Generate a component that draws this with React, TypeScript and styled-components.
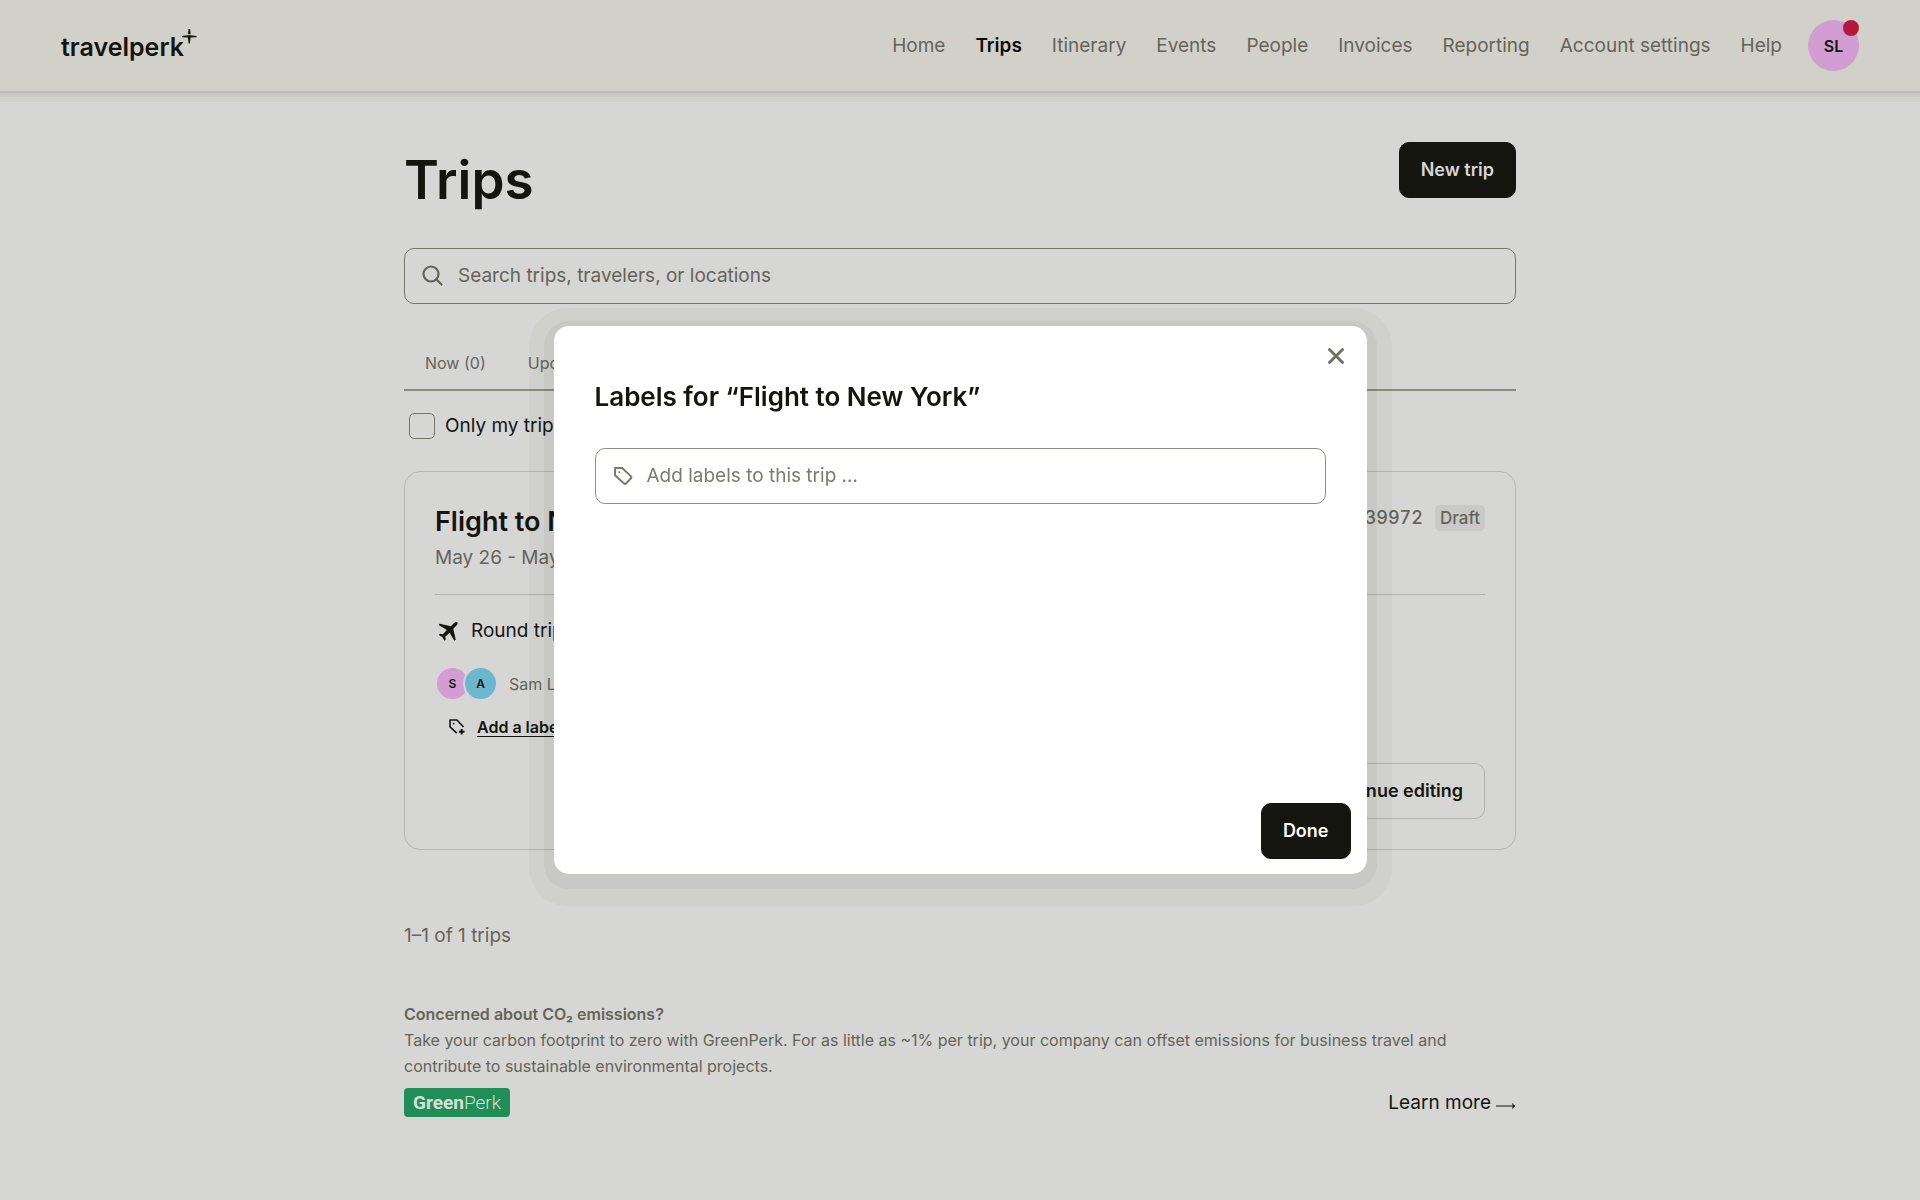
import React from "react";
import styled, { createGlobalStyle } from "styled-components";

const ink = "#14150f";
const muted = "#64645a";

const GlobalStyle = createGlobalStyle`
  *, *::before, *::after { box-sizing: border-box; }
  body {
    margin: 0;
    min-height: 100vh;
    background: #d6d6d4;
    color: ${ink};
    font-family: Inter, "Noto Sans", sans-serif;
    font-size: 19px;
    line-height: 26px;
  }
  h1, h2, p { margin: 0; }
  button, input { font: inherit; color: inherit; }
  a { color: inherit; text-decoration: none; }
`;

/* Header */

const Header = styled.header`
  position: relative;
  display: flex;
  align-items: center;
  justify-content: space-between;
  height: 91px;
  padding: 0 61px;
  background: #d2d1c9;
  box-shadow: 0 2px 0 #bbbcb6, 0 6px 0 #c9c9c6, 0 11px 0 #d0d0cd;
`;

const Logo = styled.a`
  display: flex;
  align-items: flex-start;
  padding-top: 2px;
  font-size: 25px;
  font-weight: 600;
  line-height: 36px;

  svg { display: block; margin-left: -2px; }
`;

const HeaderEnd = styled.div`
  display: flex;
  align-items: center;
  gap: 26px;
`;

const Nav = styled.nav`
  display: flex;
  align-items: center;
  gap: 30px;
`;

const NavLink = styled.a<{ $active?: boolean }>`
  color: ${(p) => (p.$active ? "#0c0c08" : muted)};
  font-weight: ${(p) => (p.$active ? 600 : 400)};
`;

const Profile = styled.button`
  position: relative;
  width: 51px;
  height: 51px;
  padding: 0;
  border: 0;
  border-radius: 50%;
  background: #d29dd2;
  font-size: 16px;
  font-weight: 600;
`;

const Alert = styled.span`
  position: absolute;
  top: 0;
  right: 0;
  width: 16px;
  height: 16px;
  border-radius: 50%;
  background: #b3193d;
`;

/* Page */

const Main = styled.main`
  max-width: 1160px;
  margin: 0 auto;
  padding: 51px 24px;
`;

const TitleRow = styled.div`
  display: flex;
  align-items: flex-start;
  justify-content: space-between;
`;

const PageTitle = styled.h1`
  font-size: 53px;
  font-weight: 600;
  line-height: 76px;
`;

const Button = styled.button<{ $outline?: boolean; $dim?: boolean }>`
  height: 56px;
  padding: 0 21px;
  border: 1px solid ${(p) => (p.$outline ? "#b3b3ae" : ink)};
  border-radius: 10px;
  background: ${(p) => (p.$outline ? "transparent" : ink)};
  color: ${(p) => (p.$outline ? ink : p.$dim ? "#d6d6d4" : "#fff")};
  font-size: 18px;
  font-weight: 600;
`;

const Field = styled.label`
  display: flex;
  align-items: center;
  gap: 13px;
  height: 56px;
  padding: 0 16px;
  border: 1px solid #75756a;
  border-radius: 10px;
  color: ${muted};

  svg { flex: none; }
`;

const FieldInput = styled.input`
  flex: 1;
  min-width: 0;
  padding: 0;
  border: 0;
  outline: 0;
  background: transparent;

  &::placeholder { color: inherit; opacity: 1; }
`;

const SearchField = styled(Field)`
  margin-top: 30px;
`;

const Tabs = styled.div`
  display: flex;
  margin-top: 32px;
  border-bottom: 2px solid #8b8b81;
`;

const Tab = styled.button`
  height: 53px;
  padding: 0 21px;
  border: 0;
  background: transparent;
  color: ${muted};
  font-size: 16px;
`;

const Check = styled.label`
  display: flex;
  align-items: center;
  gap: 10px;
  margin: 22px 0 0 5px;
`;

const CheckBox = styled.input`
  appearance: none;
  width: 26px;
  height: 26px;
  margin: 0;
  border: 1px solid #75756a;
  border-radius: 5px;
`;

/* Trip card */

const Card = styled.article`
  margin-top: 32px;
  padding: 31px 30px 30px;
  border: 1px solid #b5b5b2;
  border-radius: 16px;
`;

const CardHeader = styled.div`
  display: flex;
  align-items: flex-start;
  justify-content: space-between;
  padding-bottom: 23px;
  border-bottom: 1px solid #b0b0ac;
`;

const Heading = styled.h2`
  font-size: 26px;
  font-weight: 600;
  line-height: 38px;
`;

const CardTitle = styled(Heading)`
  font-size: 27px;
`;

const Dates = styled.p`
  margin-top: 4px;
  color: ${muted};
`;

const Status = styled.div`
  display: flex;
  align-items: center;
  gap: 12px;
  padding-top: 2px;
  color: ${muted};
  font-size: 18px;
  font-weight: 500;
  font-variant-numeric: tabular-nums;
`;

const Badge = styled.span`
  padding: 0 5px;
  border-radius: 5px;
  background: #c9c9c7;
  font-size: 17px;
`;

const Route = styled.p`
  display: flex;
  align-items: center;
  gap: 12px;
  margin: 23px 0 0 3px;
`;

const Travelers = styled.div`
  display: flex;
  align-items: center;
  margin-top: 22px;
  color: ${muted};
  font-size: 16px;
`;

const Avatar = styled.span<{ $color: string }>`
  display: grid;
  place-items: center;
  width: 35px;
  height: 35px;
  border: 2px solid #d6d6d4;
  border-radius: 50%;
  background: ${(p) => p.$color};
  color: ${ink};
  font-size: 12px;
  font-weight: 600;

  & + & { margin-left: -7px; }
`;

const Names = styled.span`
  margin-left: 11px;
`;

const AddLabel = styled.button`
  display: flex;
  align-items: center;
  gap: 11px;
  height: 24px;
  margin: 14px 0 0 13px;
  padding: 0;
  border: 0;
  background: transparent;
  font-size: 16px;
  font-weight: 600;
  text-decoration: underline;
  text-underline-offset: 3px;
`;

const CardActions = styled.div`
  display: flex;
  justify-content: flex-end;
  margin-top: 24px;
`;

const Count = styled.p`
  margin-top: 73px;
  color: ${muted};
`;

/* Footer */

const Footer = styled.footer`
  margin-top: 52px;
  color: ${muted};
  font-size: 16px;
`;

const FooterTitle = styled.p`
  font-weight: 600;
`;

const FooterRow = styled.div`
  display: flex;
  align-items: center;
  justify-content: space-between;
  margin-top: 9px;
`;

const GreenPerk = styled.span`
  padding: 0 9px;
  border-radius: 4px;
  background: #1f8f57;
  color: #d9dfd8;
  font-family: Roboto, sans-serif;
  font-size: 19px;
  font-weight: 300;
  line-height: 29px;

  b { font-weight: 700; }
`;

const LearnMore = styled.a`
  display: flex;
  align-items: center;
  gap: 5px;
  color: ${ink};
  font-size: 19px;

  svg { margin-top: 6px; }
`;

/* Dialog */

const Overlay = styled.div`
  position: fixed;
  inset: 0;
  display: grid;
  place-items: center;
`;

const Dialog = styled.section`
  display: flex;
  flex-direction: column;
  width: min(813px, 90vw);
  min-height: 548px;
  padding: 15px 16px;
  border-radius: 15px;
  background: #fff;
  box-shadow: 0 5px 0 10px rgba(20, 21, 15, 0.04), 0 7px 0 25px rgba(20, 21, 15, 0.03);
`;

const Close = styled.button`
  align-self: flex-end;
  display: grid;
  place-items: center;
  width: 30px;
  height: 30px;
  padding: 0;
  border: 0;
  background: transparent;
  color: #6f6f64;
`;

const DialogBody = styled.div`
  flex: 1;
  padding: 7px 25px 24px;
`;

const LabelField = styled(Field)`
  margin-top: 32px;
  border-color: #8f8f84;
  color: #7b7b70;
`;

const DialogActions = styled.div`
  display: flex;
  justify-content: flex-end;
`;

/* Icons */

const Sparkle = () => (
  <svg width="15" height="15" viewBox="0 0 15 15" fill={ink} aria-hidden="true">
    <path d="M6.500 0h1.600l.5 5.200H6zM0 7.100l6-.9h2.600l6 .9v1.200l-6 .3-.7 5.900H6.600l-.7-5.900L0 8.300z" />
  </svg>
);

const SearchIcon = () => (
  <svg width="24" height="24" viewBox="0 0 24 24" fill="none" stroke="currentColor" strokeWidth="2.2" strokeLinecap="round" aria-hidden="true">
    <circle cx="10" cy="10" r="7.5" />
    <path d="M15.5 15.5 20.500 20.500" />
  </svg>
);

const TagIcon = () => (
  <svg width="22" height="22" viewBox="0 0 22 22" fill="none" stroke="currentColor" strokeWidth="2" strokeLinejoin="round" aria-hidden="true">
    <path d="M3 3h7.200L19 11.400a1.300 1.300 0 0 1 0 1.900L14 18.500a1.300 1.300 0 0 1-1.900 0L3 10.200z" />
    <circle cx="7.300" cy="7.300" r="1" fill="currentColor" stroke="none" />
  </svg>
);

const TagPlusIcon = () => (
  <svg width="18" height="18" viewBox="0 0 18 18" fill="none" stroke={ink} strokeWidth="1.6" strokeLinejoin="round" aria-hidden="true">
    <path d="M15.500 9 9 2H2v6.800L8.800 15.200" />
    <circle cx="5.600" cy="5.600" r=".9" fill={ink} stroke="none" />
    <path d="M13.700 11v5.600M10.900 13.800h5.600" strokeWidth="2" />
  </svg>
);

const PlaneIcon = () => (
  <svg width="21" height="21" viewBox="0 0 21 21" fill={ink} aria-hidden="true">
    <path d="M19.300 1.300c-.7-.7-2-.4-2.900.5l-3.500 3.400L1.700 2.700.7 4.100l8.200 4.800-4 4.300-3-.4-1.100 1.200 3.500 2.100 2.200 3.700 1.200-1.100-.4-3 4.300-4 4.700 8.100 1.500-1-2.500-11.100 3.400-3.500c.9-.9 1.200-2.200.6-2.900z" />
  </svg>
);

const CloseIcon = () => (
  <svg width="18" height="18" viewBox="0 0 18 18" fill="none" stroke="currentColor" strokeWidth="2.8" strokeLinecap="round" aria-hidden="true">
    <path d="M2.400 2.400 15.600 15.600M15.600 2.400 2.400 15.600" />
  </svg>
);

const ArrowIcon = () => (
  <svg width="20" height="8" viewBox="0 0 20 8" fill="none" stroke={ink} strokeWidth="1.2" aria-hidden="true">
    <path d="M0 4h19M16.500 1.500c.3 1.500 1.200 2.300 2.500 2.500-1.300.2-2.200 1-2.500 2.500" />
  </svg>
);

const links = ["Home", "Trips", "Itinerary", "Events", "People", "Invoices", "Reporting", "Account settings", "Help"];
const tabs = ["Now (0)", "Upcoming (0)", "Past (0)", "Drafts (1)"];

export default function App() {
  return (
    <>
      <GlobalStyle />
      <Header>
        <Logo href="#">
          travelperk
          <Sparkle />
        </Logo>
        <HeaderEnd>
          <Nav>
            {links.map((name) => (
              <NavLink key={name} href="#" $active={name === "Trips"}>
                {name}
              </NavLink>
            ))}
          </Nav>
          <Profile>
            SL
            <Alert />
          </Profile>
        </HeaderEnd>
      </Header>

      <Main>
        <TitleRow>
          <PageTitle>Trips</PageTitle>
          <Button $dim>New trip</Button>
        </TitleRow>

        <SearchField>
          <SearchIcon />
          <FieldInput type="search" aria-label="Search" placeholder="Search trips, travelers, or locations" />
        </SearchField>

        <Tabs>
          {tabs.map((name) => (
            <Tab key={name}>{name}</Tab>
          ))}
        </Tabs>

        <Check>
          <CheckBox type="checkbox" />
          Only my trips
        </Check>

        <Card>
          <CardHeader>
            <div>
              <CardTitle>Flight to New York</CardTitle>
              <Dates>May 26 - May 28</Dates>
            </div>
            <Status>
              39972
              <Badge>Draft</Badge>
            </Status>
          </CardHeader>
          <Route>
            <PlaneIcon />
            Round trip
          </Route>
          <Travelers>
            <Avatar $color="#d29dd2">S</Avatar>
            <Avatar $color="#6cb7ce">A</Avatar>
            <Names>Sam Lee</Names>
          </Travelers>
          <AddLabel>
            <TagPlusIcon />
            Add a label
          </AddLabel>
          <CardActions>
            <Button $outline>Continue editing</Button>
          </CardActions>
        </Card>

        <Count>1–1 of 1 trips</Count>

        <Footer>
          <FooterTitle>Concerned about CO₂ emissions?</FooterTitle>
          <p>
            Take your carbon footprint to zero with GreenPerk. For as little as ~1% per trip, your company can offset
            emissions for business travel and contribute to sustainable environmental projects.
          </p>
          <FooterRow>
            <GreenPerk>
              <b>Green</b>Perk
            </GreenPerk>
            <LearnMore href="#">
              Learn more
              <ArrowIcon />
            </LearnMore>
          </FooterRow>
        </Footer>
      </Main>

      <Overlay>
        <Dialog role="dialog" aria-modal="true" aria-labelledby="dialog-title">
          <Close aria-label="Close">
            <CloseIcon />
          </Close>
          <DialogBody>
            <Heading id="dialog-title">Labels for “Flight to New York”</Heading>
            <LabelField>
              <TagIcon />
              <FieldInput type="text" aria-label="Labels" placeholder="Add labels to this trip …" />
            </LabelField>
          </DialogBody>
          <DialogActions>
            <Button>Done</Button>
          </DialogActions>
        </Dialog>
      </Overlay>
    </>
  );
}
